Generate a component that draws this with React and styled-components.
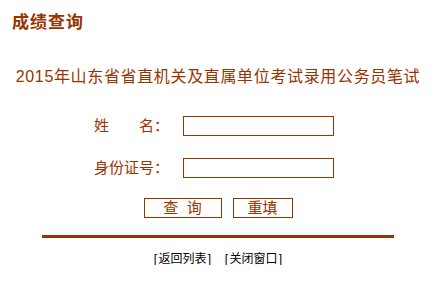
import React from 'react';
import styled, { createGlobalStyle } from 'styled-components';

const brown = '#993300';

const GlobalStyle = createGlobalStyle`
 body {
  margin: 0;
  background: #fff;
  font-family: "Liberation Sans", "Noto Sans CJK SC", sans-serif;
 }
`;

const Page = styled.div`
 width: 445px;
 padding-right: 9px;
 box-sizing: border-box;
`;

const Title = styled.h1`
 margin: 14px 0 0 12px;
 font-size: 17px;
 line-height: 17px;
 letter-spacing: 1px;
 font-weight: bold;
 color: ${brown};
`;

const Subtitle = styled.div`
 margin-top: 38px;
 font-size: 16px;
 line-height: 16px;
 letter-spacing: 0.65px;
 color: ${brown};
 text-align: center;
 white-space: nowrap;
`;

const Form = styled.form`
 margin: 31px 0 0 94px;
 display: grid;
 grid-template-columns: 89px 151px;
 row-gap: 22px;
 align-items: center;
`;

const Label = styled.label`
 font-size: 15px;
 line-height: 20px;
 color: ${brown};
 white-space: pre;
`;

const Input = styled.input`
 width: 151px;
 height: 20px;
 box-sizing: border-box;
 border: 1px solid ${brown};
 margin: 0;
 padding: 0 3px;
 outline: none;
`;

const Buttons = styled.div`
 display: flex;
 justify-content: center;
 gap: 11px;
 margin-top: 20px;
`;

const Button = styled.button`
 width: ${p => p.$w}px;
 height: 20px;
 box-sizing: border-box;
 border: 1px solid ${brown};
 background: #fff;
 color: ${brown};
 font-family: inherit;
 font-size: 15px;
 line-height: 18px;
 padding: 0;
 white-space: pre;
`;

const Rule = styled.hr`
 width: 352px;
 height: 3px;
 margin: 17px auto 0;
 border: none;
 background: ${brown};
`;

const Links = styled.div`
 display: flex;
 justify-content: center;
 gap: 11px;
 margin-top: 15px;
 font-size: 12px;
 line-height: 12px;
`;

const Link = styled.a`
 color: #000;
 text-decoration: none;
 cursor: pointer;
`;

const Bracket = styled.span`
 display: inline-block;
 width: 6px;
 text-align: center;
`;

export default function App() {
 return (
  <Page>
   <GlobalStyle />
   <Title>成绩查询</Title>
   <Subtitle>2015年山东省省直机关及直属单位考试录用公务员笔试</Subtitle>
   <Form onSubmit={e => e.preventDefault()}>
    <Label>{'姓　　名：'}</Label>
    <Input type="text" />
    <Label>身份证号：</Label>
    <Input type="text" />
   </Form>
   <Buttons>
    <Button $w={78} type="button">{'查  询'}</Button>
    <Button $w={60} type="button">重填</Button>
   </Buttons>
   <Rule />
   <Links>
    <Link><Bracket>[</Bracket>返回列表<Bracket>]</Bracket></Link>
    <Link><Bracket>[</Bracket>关闭窗口<Bracket>]</Bracket></Link>
   </Links>
  </Page>
 );
}
